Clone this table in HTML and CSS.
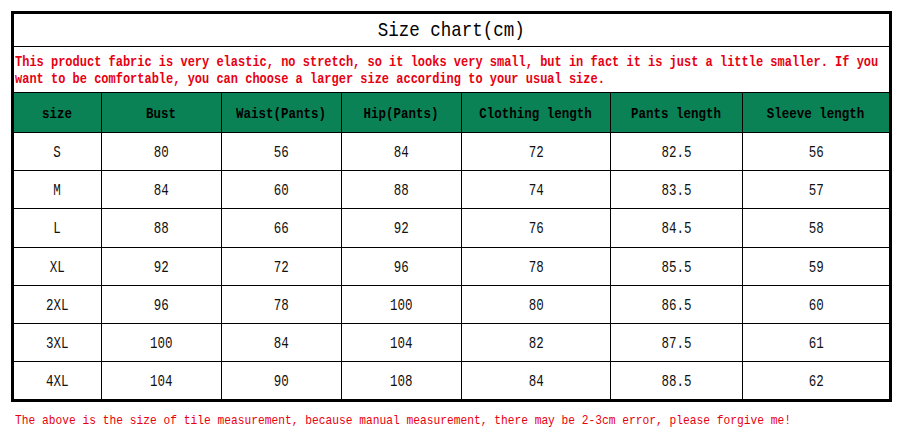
FILE: index.html
```html
<!DOCTYPE html>
<html lang="en">
<head>
<meta charset="utf-8">
<title>Size chart</title>
<link rel="stylesheet" href="styles.css">
</head>
<body>
<div class="chart">
  <div class="title"><span class="sq">Size chart(cm)</span></div>
  <div class="note">
    <p class="note-text">This product fabric is very elastic, no stretch, so it looks very small, but in fact it is just a little smaller. If you want to be comfortable, you can choose a larger size according to your usual size.</p>
  </div>
  <div class="grid">
    <div class="cell head"><span class="sq">size</span></div>
    <div class="cell head"><span class="sq">Bust</span></div>
    <div class="cell head"><span class="sq">Waist(Pants)</span></div>
    <div class="cell head"><span class="sq">Hip(Pants)</span></div>
    <div class="cell head"><span class="sq">Clothing length</span></div>
    <div class="cell head"><span class="sq">Pants length</span></div>
    <div class="cell head"><span class="sq">Sleeve length</span></div>

    <div class="cell"><span class="dq">S</span></div>
    <div class="cell"><span class="dq">80</span></div>
    <div class="cell"><span class="dq">56</span></div>
    <div class="cell"><span class="dq">84</span></div>
    <div class="cell"><span class="dq">72</span></div>
    <div class="cell"><span class="dq">82.5</span></div>
    <div class="cell"><span class="dq">56</span></div>

    <div class="cell"><span class="dq">M</span></div>
    <div class="cell"><span class="dq">84</span></div>
    <div class="cell"><span class="dq">60</span></div>
    <div class="cell"><span class="dq">88</span></div>
    <div class="cell"><span class="dq">74</span></div>
    <div class="cell"><span class="dq">83.5</span></div>
    <div class="cell"><span class="dq">57</span></div>

    <div class="cell"><span class="dq">L</span></div>
    <div class="cell"><span class="dq">88</span></div>
    <div class="cell"><span class="dq">66</span></div>
    <div class="cell"><span class="dq">92</span></div>
    <div class="cell"><span class="dq">76</span></div>
    <div class="cell"><span class="dq">84.5</span></div>
    <div class="cell"><span class="dq">58</span></div>

    <div class="cell"><span class="dq">XL</span></div>
    <div class="cell"><span class="dq">92</span></div>
    <div class="cell"><span class="dq">72</span></div>
    <div class="cell"><span class="dq">96</span></div>
    <div class="cell"><span class="dq">78</span></div>
    <div class="cell"><span class="dq">85.5</span></div>
    <div class="cell"><span class="dq">59</span></div>

    <div class="cell"><span class="dq">2XL</span></div>
    <div class="cell"><span class="dq">96</span></div>
    <div class="cell"><span class="dq">78</span></div>
    <div class="cell"><span class="dq">100</span></div>
    <div class="cell"><span class="dq">80</span></div>
    <div class="cell"><span class="dq">86.5</span></div>
    <div class="cell"><span class="dq">60</span></div>

    <div class="cell"><span class="dq">3XL</span></div>
    <div class="cell"><span class="dq">100</span></div>
    <div class="cell"><span class="dq">84</span></div>
    <div class="cell"><span class="dq">104</span></div>
    <div class="cell"><span class="dq">82</span></div>
    <div class="cell"><span class="dq">87.5</span></div>
    <div class="cell"><span class="dq">61</span></div>

    <div class="cell"><span class="dq">4XL</span></div>
    <div class="cell"><span class="dq">104</span></div>
    <div class="cell"><span class="dq">90</span></div>
    <div class="cell"><span class="dq">108</span></div>
    <div class="cell"><span class="dq">84</span></div>
    <div class="cell"><span class="dq">88.5</span></div>
    <div class="cell"><span class="dq">62</span></div>
  </div>
</div>
<div class="footer">
  <p class="footer-text">The above is the size of tile measurement, because manual measurement, there may be 2-3cm error, please forgive me!</p>
</div>
</body>
</html>
```

FILE: styles.css
```css
html, body {
  margin: 0;
  padding: 0;
  background: #ffffff;
}

body {
  font-family: "Liberation Mono", "DejaVu Sans Mono", monospace;
  color: #000;
}

.chart {
  margin: 11px 0 0 11px;
  width: 875px;
  border: 3px solid #000;
  background: #fff;
}

.title {
  height: 33px;
  box-sizing: border-box;
  padding-top: 1px;
  line-height: 31px;
  text-align: center;
  font-size: 21px;
  border-bottom: 1px solid #000;
}

.sq {
  display: inline-block;
  transform: scaleX(0.833);
  white-space: nowrap;
}

.note {
  height: 46px;
  box-sizing: border-box;
  padding: 7px 0 0 1px;
  border-bottom: 1px solid #000;
  overflow: hidden;
}

.note-text {
  margin: 0;
  width: 1049px;
  transform: scaleX(0.833);
  transform-origin: 0 0;
  font-size: 14.4px;
  line-height: 17px;
  font-weight: bold;
  color: #e60012;
}

.grid {
  display: grid;
  grid-template-columns: 87px 120px 120px 120px 149px 132px 147px;
  grid-template-rows: 39px 38px 38px 39px 38px 38px 38px 38px;
}

.cell {
  box-sizing: border-box;
  padding-top: 1px;
  border-left: 1px solid #000;
  border-top: 1px solid #000;
  display: flex;
  align-items: center;
  justify-content: center;
  font-size: 17px;
}

.cell:nth-child(7n+1) {
  border-left: none;
}

.cell.head {
  padding-top: 4px;
  border-top: none;
  background: #0a8256;
  font-size: 15px;
  font-weight: bold;
  color: #000;
}

.dq {
  display: inline-block;
  transform: scaleX(0.735);
  white-space: nowrap;
  color: #111;
}

.footer {
  margin: 11px 0 0 15px;
  width: 880px;
  overflow: hidden;
}

.footer-text {
  margin: 0;
  white-space: nowrap;
  font-size: 13.5px;
  line-height: 16px;
  color: #e8000e;
  transform: scaleX(0.833);
  transform-origin: 0 0;
}
```
